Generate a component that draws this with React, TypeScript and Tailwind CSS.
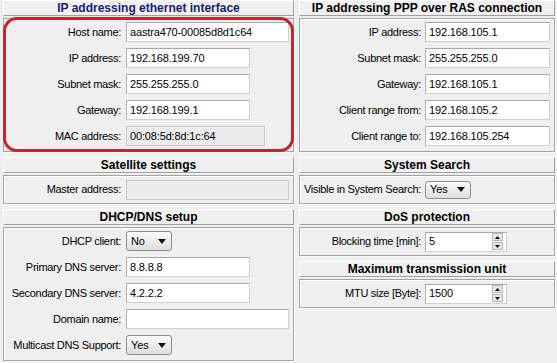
import React from "react";

const LBL = "font-['Liberation_Sans',sans-serif] text-[11px] tracking-[-0.3px] leading-none text-black whitespace-nowrap";
const TXT = "font-['Liberation_Sans',sans-serif] text-[11px] tracking-[-0.15px] leading-none text-black whitespace-nowrap";

function Header({ title, navy }: { title: string; navy?: boolean }) {
  return (
    <div
      className={
        "h-[16px] flex items-center justify-center bg-[#f0f0f0] border border-t-white border-l-white border-r-[#a0a0a0] border-b-[#a0a0a0] font-['Liberation_Sans',sans-serif] font-bold text-[12px] leading-none " +
        (navy ? "text-[#1b1b78]" : "text-black")
      }
    >
      {title}
    </div>
  );
}

function Body({ children, className }: { children: React.ReactNode; className: string }) {
  return (
    <div className={"mt-[2px] border border-[#a3a3a3] shadow-[inset_1px_1px_0_#ffffff,1px_1px_0_#ffffff] " + className}>
      {children}
    </div>
  );
}

function Input({ value, w, disabled }: { value: string; w: string; disabled?: boolean }) {
  return (
    <div
      className={
        "h-[20px] flex items-center pl-[3px] border " +
        (disabled
          ? "bg-[#ececec] border-[#c9c9c9] "
          : "bg-white border-[#d0d0d0] border-t-[#a8a8a8] border-l-[#b0b0b0] ") +
        w
      }
    >
      <span className={TXT + (disabled ? " text-[#333]" : "")}>{value}</span>
    </div>
  );
}

function Select({ value, h }: { value: string; h: string }) {
  return (
    <div
      className={
        "w-[46px] flex items-center justify-between pl-[4px] pr-[5px] rounded-[3px] border border-[#8c8c8c] bg-gradient-to-b from-[#fbfbfb] to-[#dedede] " +
        h
      }
    >
      <span className={TXT}>{value}</span>
      <svg width="8" height="5" viewBox="0 0 8 5">
        <path d="M0 0 H8 L4 5 Z" fill="#111" />
      </svg>
    </div>
  );
}

function Spin({ value }: { value: string }) {
  return (
    <div className="w-[82px] h-[20px] flex items-center justify-between pl-[3px] pr-[3px] bg-white border border-[#d0d0d0] border-t-[#a8a8a8] border-l-[#b0b0b0]">
      <span className={TXT}>{value}</span>
      <div className="flex flex-col gap-px">
        <div className="w-[11px] h-[8px] flex items-center justify-center bg-[#e6e6e6] border border-[#b8b8b8]">
          <svg width="5" height="3" viewBox="0 0 5 3">
            <path d="M0 3 H5 L2.5 0 Z" fill="#000" />
          </svg>
        </div>
        <div className="w-[11px] h-[8px] flex items-center justify-center bg-[#e6e6e6] border border-[#b8b8b8]">
          <svg width="5" height="3" viewBox="0 0 5 3">
            <path d="M0 0 H5 L2.5 3 Z" fill="#000" />
          </svg>
        </div>
      </div>
    </div>
  );
}

function LRow({ label, children, navy }: { label: string; children: React.ReactNode; navy?: boolean }) {
  return (
    <div className="flex items-center h-[20px]">
      <span className={LBL + " w-[119px] text-right pr-[2px] mr-[3px]" + (navy ? " text-[#25257e]" : "")}>{label}</span>
      {children}
    </div>
  );
}

function RRow({ label, children }: { label: string; children: React.ReactNode }) {
  return (
    <div className="flex items-center h-[20px]">
      <span className={LBL + " w-[123px] text-right pr-[2px] mr-[2px]"}>{label}</span>
      {children}
    </div>
  );
}

export default function App() {
  return (
    <div className="w-[557px] h-[363px] overflow-hidden bg-[#efefef] flex gap-[5px] pl-[3px]">
      {/* Left column */}
      <div className="w-[291px] flex flex-col">
        <div className="relative">
          <Header title="IP addressing ethernet interface" navy />
          <Body className="h-[134px] pt-[3px] flex flex-col gap-[6px]">
            <LRow label="Host name:">
              <Input value="aastra470-00085d8d1c64" w="w-[163px]" />
            </LRow>
            <LRow label="IP address:">
              <Input value="192.168.199.70" w="w-[124px]" />
            </LRow>
            <LRow label="Subnet mask:">
              <Input value="255.255.255.0" w="w-[124px]" />
            </LRow>
            <LRow label="Gateway:">
              <Input value="192.168.199.1" w="w-[124px]" />
            </LRow>
            <LRow label="MAC address:">
              <Input value="00:08:5d:8d:1c:64" w="w-[139px]" disabled />
            </LRow>
          </Body>
          <div className="absolute left-0 top-[17px] w-[291px] h-[135px] border-[3px] border-[#c4262e] rounded-[14px] pointer-events-none" />
        </div>

        <div className="mt-[5px]">
          <Header title="Satellite settings" />
          <Body className="h-[29px] flex items-center">
            <LRow label="Master address:">
              <Input value="" w="w-[163px]" disabled />
            </LRow>
          </Body>
        </div>

        <div className="mt-[5px]">
          <Header title="DHCP/DNS setup" />
          <Body className="h-[134px] pt-[3px] flex flex-col gap-[6px]">
            <LRow label="DHCP client:">
              <Select value="No" h="h-[20px]" />
            </LRow>
            <LRow label="Primary DNS server:">
              <Input value="8.8.8.8" w="w-[124px]" />
            </LRow>
            <LRow label="Secondary DNS server:">
              <Input value="4.2.2.2" w="w-[124px]" />
            </LRow>
            <LRow label="Domain name:">
              <Input value="" w="w-[163px]" />
            </LRow>
            <LRow label="Multicast DNS Support:" navy>
              <Select value="Yes" h="h-[20px]" />
            </LRow>
          </Body>
        </div>
      </div>

      {/* Right column */}
      <div className="w-[256px] flex flex-col">
        <div>
          <Header title="IP addressing PPP over RAS connection" />
          <Body className="h-[134px] pt-[3px] flex flex-col gap-[6px]">
            <RRow label="IP address:">
              <Input value="192.168.105.1" w="w-[125px]" />
            </RRow>
            <RRow label="Subnet mask:">
              <Input value="255.255.255.0" w="w-[125px]" />
            </RRow>
            <RRow label="Gateway:">
              <Input value="192.168.105.1" w="w-[125px]" />
            </RRow>
            <RRow label="Client range from:">
              <Input value="192.168.105.2" w="w-[125px]" />
            </RRow>
            <RRow label="Client range to:">
              <Input value="192.168.105.254" w="w-[125px]" />
            </RRow>
          </Body>
        </div>

        <div className="mt-[5px]">
          <Header title="System Search" />
          <Body className="h-[29px] flex items-center">
            <RRow label="Visible in System Search:">
              <Select value="Yes" h="h-[18px]" />
            </RRow>
          </Body>
        </div>

        <div className="mt-[5px]">
          <Header title="DoS protection" />
          <Body className="h-[29px] flex items-center">
            <RRow label="Blocking time [min]:">
              <Spin value="5" />
            </RRow>
          </Body>
        </div>

        <div className="mt-[5px]">
          <Header title="Maximum transmission unit" />
          <Body className="h-[29px] flex items-center">
            <RRow label="MTU size [Byte]:">
              <Spin value="1500" />
            </RRow>
          </Body>
        </div>
      </div>
    </div>
  );
}
